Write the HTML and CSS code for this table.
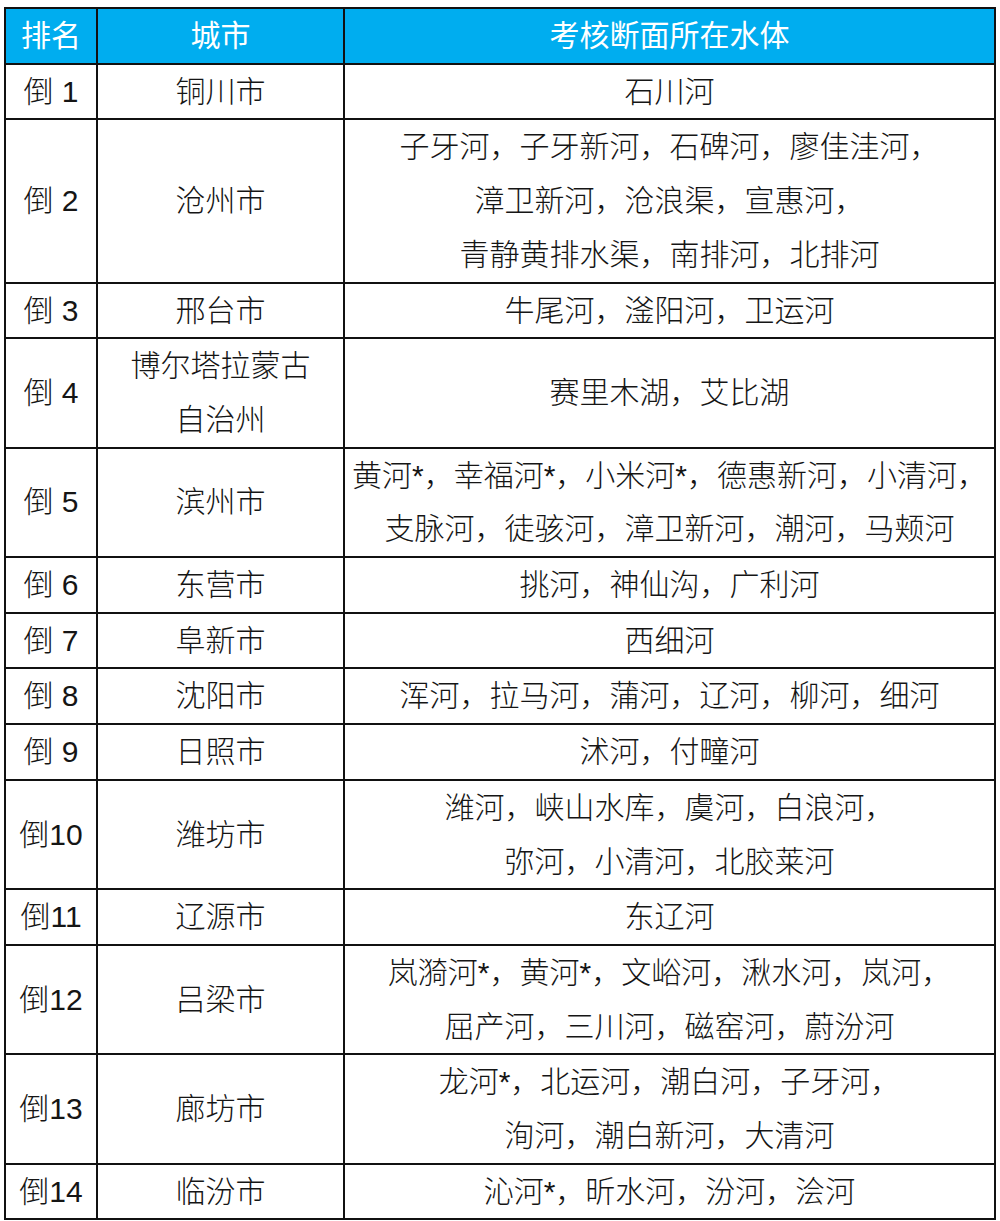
FILE: index.html
```html
<!DOCTYPE html>
<html lang="zh-CN">
<head>
<meta charset="utf-8">
<link rel="stylesheet" href="styles.css">
</head>
<body>
<table class="rank">
  <colgroup>
    <col class="c1"><col class="c2"><col class="c3">
  </colgroup>
  <thead>
    <tr><th>排名</th><th>城市</th><th>考核断面所在水体</th></tr>
  </thead>
  <tbody>
    <tr><td>倒 1</td><td>铜川市</td><td>石川河</td></tr>
    <tr><td>倒 2</td><td>沧州市</td><td>子牙河，子牙新河，石碑河，廖佳洼河，<br>漳卫新河，沧浪渠，宣惠河，<br>青静黄排水渠，南排河，北排河</td></tr>
    <tr><td>倒 3</td><td>邢台市</td><td>牛尾河，滏阳河，卫运河</td></tr>
    <tr><td>倒 4</td><td>博尔塔拉蒙古<br>自治州</td><td>赛里木湖，艾比湖</td></tr>
    <tr><td>倒 5</td><td>滨州市</td><td>黄河*，幸福河*，小米河*，德惠新河，小清河，<br>支脉河，徒骇河，漳卫新河，潮河，马颊河</td></tr>
    <tr><td>倒 6</td><td>东营市</td><td>挑河，神仙沟，广利河</td></tr>
    <tr><td>倒 7</td><td>阜新市</td><td>西细河</td></tr>
    <tr><td>倒 8</td><td>沈阳市</td><td>浑河，拉马河，蒲河，辽河，柳河，细河</td></tr>
    <tr><td>倒 9</td><td>日照市</td><td>沭河，付疃河</td></tr>
    <tr><td>倒10</td><td>潍坊市</td><td>潍河，峡山水库，虞河，白浪河，<br>弥河，小清河，北胶莱河</td></tr>
    <tr><td>倒11</td><td>辽源市</td><td>东辽河</td></tr>
    <tr><td>倒12</td><td>吕梁市</td><td>岚漪河*，黄河*，文峪河，湫水河，岚河，<br>屈产河，三川河，磁窑河，蔚汾河</td></tr>
    <tr><td>倒13</td><td>廊坊市</td><td>龙河*，北运河，潮白河，子牙河，<br>洵河，潮白新河，大清河</td></tr>
    <tr><td>倒14</td><td>临汾市</td><td>沁河*，昕水河，汾河，浍河</td></tr>
  </tbody>
</table>
</body>
</html>
```
FILE: styles.css
```css
html, body {
  margin: 0;
  padding: 0;
  background: #ffffff;
}
body {
  padding: 7px 0 0 4px;
}
.rank {
  border-collapse: collapse;
  width: 990px;
  table-layout: fixed;
  font-family: "Liberation Sans", "Noto Sans CJK SC", sans-serif;
  font-size: 30px;
  font-weight: 300;
  color: #151515;
}
.c1 { width: 92px; }
.c2 { width: 247px; }
.c3 { width: 651px; }
.rank th,
.rank td {
  border: 2px solid #111111;
  padding: 0;
  text-align: center;
  vertical-align: middle;
  line-height: 53.7px;
  white-space: nowrap;
}
.rank th {
  background: #00adef;
  color: #ffffff;
  font-weight: 400;
}
```
